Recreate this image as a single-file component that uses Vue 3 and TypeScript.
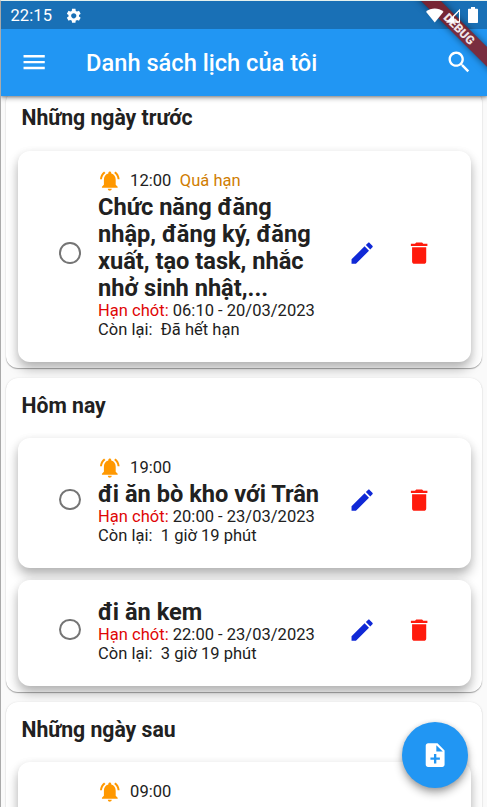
<script setup lang="ts">
interface Task {
  id: number
  alarm?: string
  overdue?: boolean
  title?: string
  due?: string
  left?: string
}
interface Section {
  heading: string
  tasks: Task[]
}

const sections: Section[] = [
  {
    heading: 'Những ngày trước',
    tasks: [
      {
        id: 1,
        alarm: '12:00',
        overdue: true,
        title: 'Chức năng đăng nhập, đăng ký, đăng xuất, tạo task, nhắc nhở sinh nhật,...',
        due: '06:10 - 20/03/2023',
        left: 'Đã hết hạn',
      },
    ],
  },
  {
    heading: 'Hôm nay',
    tasks: [
      { id: 2, alarm: '19:00', title: 'đi ăn bò kho với Trân', due: '20:00 - 23/03/2023', left: '1 giờ 19 phút' },
      { id: 3, title: 'đi ăn kem', due: '22:00 - 23/03/2023', left: '3 giờ 19 phút' },
    ],
  },
  {
    heading: 'Những ngày sau',
    tasks: [{ id: 4, alarm: '09:00' }],
  },
]
</script>

<template>
  <div class="screen">
    <header class="top">
      <div class="status">
        <span class="clock">22:15</span>
        <svg class="gear" viewBox="0 0 24 24"><path d="M19.14 12.94c.04-.3.06-.61.06-.94 0-.32-.02-.64-.07-.94l2.03-1.58c.18-.14.23-.41.12-.61l-1.92-3.32c-.12-.22-.37-.29-.59-.22l-2.39.96c-.5-.38-1.03-.7-1.62-.94l-.36-2.54c-.04-.24-.24-.41-.48-.41h-3.84c-.24 0-.43.17-.47.41l-.36 2.54c-.59.24-1.13.57-1.62.94l-2.39-.96c-.22-.08-.47 0-.59.22L2.74 8.87c-.12.21-.08.47.12.61l2.03 1.58c-.05.3-.09.63-.09.94s.02.64.07.94l-2.03 1.58c-.18.14-.23.41-.12.61l1.92 3.32c.12.22.37.29.59.22l2.39-.96c.5.38 1.03.7 1.62.94l.36 2.54c.05.24.24.41.48.41h3.84c.24 0 .44-.17.47-.41l.36-2.54c.59-.24 1.13-.56 1.62-.94l2.39.96c.22.08.47 0 .59-.22l1.92-3.32c.12-.22.07-.47-.12-.61l-2.01-1.58zM12 15.6c-1.98 0-3.6-1.62-3.6-3.6s1.62-3.6 3.6-3.6 3.6 1.62 3.6 3.6-1.62 3.6-3.6 3.6z" /></svg>
        <div class="signals">
          <svg class="wifi" viewBox="0 0 18 15"><path d="M0 3.6C5.2-.9 12.8-.9 18 3.6L9 14.6z" /></svg>
          <svg class="cell" viewBox="0 0 15 15"><path d="M15 0v15H0zM13.400 3.700L8.300 8.800v4.600h5.100z" fill-rule="evenodd" /></svg>
          <svg class="battery" viewBox="0 0 10 16"><path d="M3 0h4v1.800h2c.6 0 1 .4 1 1V15c0 .6-.4 1-1 1H1c-.6 0-1-.4-1-1V2.800c0-.6.4-1 1-1h2z" /></svg>
        </div>
      </div>
      <div class="toolbar">
        <svg class="icon" viewBox="0 0 24 24"><path d="M3 18h18v-2H3v2zm0-5h18v-2H3v2zm0-7v2h18V6H3z" /></svg>
        <h1>Danh sách lịch của tôi</h1>
        <svg class="icon" viewBox="0 0 24 24"><path d="M15.5 14h-.79l-.28-.27C15.41 12.59 16 11.11 16 9.500 16 5.910 13.090 3 9.500 3S3 5.910 3 9.500 5.910 16 9.500 16c1.610 0 3.090-.59 4.230-1.570l.27.28v.79l5 4.990L20.490 19l-4.990-5zm-6 0C7.010 14 5 11.990 5 9.500S7.010 5 9.500 5 14 7.010 14 9.500 11.990 14 9.500 14z" /></svg>
      </div>
      <div class="corner"><div class="ribbon">DEBUG</div></div>
    </header>

    <main class="list">
      <section v-for="s in sections" :key="s.heading" class="group">
        <h2>{{ s.heading }}</h2>
        <article v-for="t in s.tasks" :key="t.id" class="card">
          <span class="radio"></span>
          <div class="body">
            <div v-if="t.alarm" class="alarm">
              <svg class="bell" viewBox="0 0 24 24"><path d="M7.58 4.080L6.150 2.650C3.750 4.480 2.170 7.300 2.030 10.500h2c.15-2.650 1.510-4.970 3.550-6.420zm12.390 6.420h2c-.15-3.200-1.730-6.020-4.120-7.850l-1.420 1.430c2.020 1.450 3.390 3.770 3.540 6.420zM18 11c0-3.070-1.640-5.640-4.500-6.320V4c0-.83-.67-1.500-1.500-1.500s-1.500.67-1.500 1.500v.68C7.630 5.360 6 7.920 6 11v5l-2 2v1h16v-1l-2-2v-5zm-6 11c.14 0 .27-.01.4-.04.65-.14 1.180-.58 1.440-1.180.1-.24.15-.5.15-.78h-4c.01 1.100.9 2 2.010 2z" /></svg>
              <span>{{ t.alarm }}</span>
              <span v-if="t.overdue" class="overdue">Quá hạn</span>
            </div>
            <h3 v-if="t.title">{{ t.title }}</h3>
            <p v-if="t.due"><span class="due">Hạn chót:</span> {{ t.due }}</p>
            <p v-if="t.left">Còn lại:&nbsp; {{ t.left }}</p>
          </div>
          <svg class="icon edit" viewBox="0 0 24 24"><path d="M3 17.250V21h3.750L17.810 9.940l-3.750-3.750L3 17.250zM20.710 7.040c.39-.39.39-1.020 0-1.410l-2.340-2.340c-.39-.39-1.020-.39-1.410 0l-1.830 1.830 3.750 3.750 1.830-1.830z" /></svg>
          <svg class="icon remove" viewBox="0 0 24 24"><path d="M6 19c0 1.100.9 2 2 2h8c1.100 0 2-.9 2-2V7H6v12zM19 4h-3.500l-1-1h-5l-1 1H5v2h14V4z" /></svg>
        </article>
      </section>
    </main>

    <button class="fab">
      <svg class="icon" viewBox="0 0 24 24"><path d="M14 2H6c-1.100 0-1.990.9-1.990 2L4 20c0 1.100.89 2 1.990 2H18c1.100 0 2-.9 2-2V8l-6-6zm2 14h-3v3h-2v-3H8v-2h3v-3h2v3h3v2zm-3-7V3.500L18.500 9H13z" /></svg>
    </button>
  </div>
</template>

<style>
body {
  margin: 0;
  overflow: hidden;
}
</style>

<style scoped>
.screen {
  position: relative;
  box-sizing: border-box;
  width: 100%;
  height: 807px;
  overflow: hidden;
  display: flex;
  flex-direction: column;
  border-left: 1px solid #aaa;
  border-top: 1px solid #e4f1ee;
  background: #fafafa;
  color: #212121;
  font-family: Roboto, sans-serif;
  font-size: 16.5px;
}
h1, h2, h3, p {
  margin: 0;
}
svg {
  display: block;
  flex: none;
  fill: currentColor;
}
.icon {
  width: 28.3px;
  height: 28.3px;
}
.top {
  flex: none;
  color: #fff;
  background: #2196f3;
  box-shadow: 0 2px 5px rgba(0, 0, 0, 0.36), 0 1px 2px rgba(0, 0, 0, 0.2);
  position: relative;
  z-index: 2;
}
.status {
  display: flex;
  align-items: center;
  height: 28px;
  padding: 0 9px 0 9.5px;
  background: #1970b6;
}
.clock {
  width: 54px;
  padding-top: 2px;
  line-height: 26px;
  letter-spacing: 0.08px;
}
.gear {
  width: 17.5px;
  height: 17.5px;
  margin-top: 1px;
}
.signals {
  position: relative;
  z-index: 2;
  display: flex;
  align-items: center;
  gap: 2px;
  margin-left: auto;
}
.wifi {
  width: 17.5px;
  height: 15px;
}
.cell {
  width: 14.5px;
  height: 15px;
  margin-right: 6px;
}
.battery {
  width: 10px;
  height: 16px;
}
.toolbar {
  display: flex;
  align-items: center;
  height: 66.5px;
  padding: 0 14.2px 0 18.8px;
}
.toolbar h1 {
  flex: 1;
  padding: 2px 0 0 38px;
  font-size: 23.6px;
  font-weight: 500;
  letter-spacing: 0.02px;
}
.corner {
  position: absolute;
  top: 0;
  right: 0;
  width: 100px;
  height: 94px;
  overflow: hidden;
}
.ribbon {
  position: absolute;
  left: 12px;
  top: 21px;
  width: 120px;
  height: 14.2px;
  background: rgba(141, 21, 22, 0.815);
  box-shadow: 0 0 7px rgba(0, 0, 0, 0.5);
  transform: rotate(45deg);
  color: #f0e4e8;
  font-size: 12px;
  line-height: 14.2px;
  font-weight: 900;
  text-align: center;
}
.list {
  flex: 1;
  min-height: 0;
  display: flex;
  flex-direction: column;
  gap: 9.4px;
  padding: 0 5px;
  margin-top: -6px;
}
.group {
  flex: none;
  position: relative;
  padding: 0 11.5px 6px 12px;
  background: #fff;
  border-radius: 12px;
  box-shadow: 0 1px 1px rgba(0, 0, 0, 0.32), 0 0 2px rgba(0, 0, 0, 0.1);
}
.group h2 {
  height: 60.5px;
  box-sizing: border-box;
  padding: 15.6px 3.5px 0;
  font-size: 21.2px;
  line-height: 25px;
  font-weight: 700;
}
.group:first-child h2 {
  height: 61.5px;
}
.card {
  display: grid;
  grid-template-columns: 62.5px 232px 28.3px 28.3px;
  column-gap: 17.5px;
  align-items: center;
  padding-bottom: 7px;
  background: #fff;
  border-radius: 12px;
  box-shadow: 0 7px 12px rgba(0, 0, 0, 0.28), 0 1px 8px rgba(0, 0, 0, 0.06);
}
.card + .card {
  margin-top: 12px;
}
.radio {
  justify-self: end;
  box-sizing: border-box;
  width: 21.5px;
  height: 21.5px;
  border: 2.4px solid #757575;
  border-radius: 50%;
}
.body {
  box-sizing: border-box;
  min-height: 98px;
  padding: 17.4px 0 16.2px;
  letter-spacing: 0.02px;
}
.card:only-of-type .body {
  min-height: 123px;
}
.alarm {
  display: flex;
  align-items: center;
  height: 24.2px;
}
.bell {
  width: 23.6px;
  height: 23.6px;
  margin-right: 8.5px;
  color: #ff9800;
}
.overdue {
  margin-left: 8.5px;
  color: #d07d02;
}
.body h3 {
  position: relative;
  top: 1px;
  font-size: 23.6px;
  line-height: 27.1px;
  font-weight: 700;
  letter-spacing: 0;
}
.body p {
  line-height: 19.1px;
  white-space: nowrap;
}
.due {
  color: #e00505;
}
.edit {
  color: #1029d6;
}
.remove {
  margin-left: 11.5px;
  color: #ff1a0c;
}
.fab {
  position: absolute;
  z-index: 2;
  right: 19px;
  bottom: 19px;
  width: 66px;
  height: 66px;
  display: grid;
  place-items: center;
  padding: 0;
  border: 0;
  border-radius: 50%;
  color: #fff;
  background: #2196f3;
  box-shadow: 0 5px 8px rgba(0, 0, 0, 0.32), 0 1px 5px rgba(0, 0, 0, 0.14);
}
</style>
